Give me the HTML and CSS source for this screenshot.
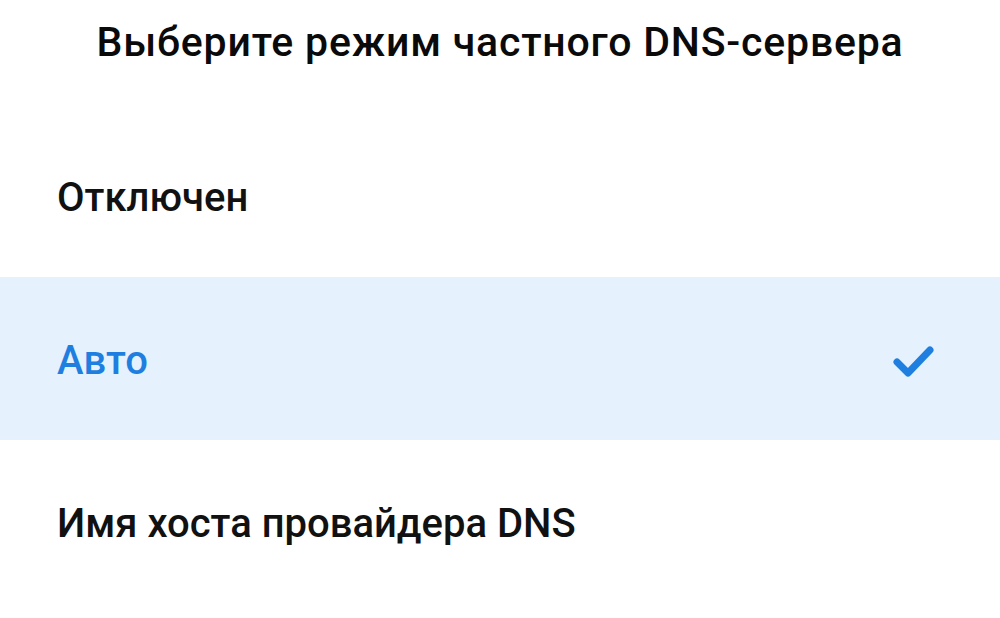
FILE: index.html
```html
<!DOCTYPE html>
<html lang="ru">
<head>
<meta charset="utf-8">
<link rel="stylesheet" href="styles.css">
</head>
<body>
<div class="dialog">
  <div class="title">Выберите режим частного DNS-сервера</div>
  <div class="option">Отключен</div>
  <div class="option selected">
    <span>Авто</span>
    <svg class="check" viewBox="0 0 44 36" width="44" height="36"><path d="M5 19 L16 30 L38 7" fill="none" stroke="#1f7fe0" stroke-width="7" stroke-linecap="round" stroke-linejoin="round"/></svg>
  </div>
  <div class="option">Имя хоста провайдера DNS</div>
</div>
</body>
</html>
```
FILE: styles.css
```css
html, body {
  margin: 0;
  padding: 0;
  background: #ffffff;
}
body {
  width: 1000px;
  height: 618px;
  overflow: hidden;
  font-family: Roboto, "Noto Sans", sans-serif;
}
.dialog {
  display: flex;
  flex-direction: column;
}
.title {
  height: 114px;
  box-sizing: border-box;
  padding-top: 17px;
  line-height: 50px;
  text-align: center;
  font-size: 41px;
  font-weight: 500;
  letter-spacing: 0.8px;
  color: #0a0a0a;
}
.option {
  height: 163px;
  box-sizing: border-box;
  padding: 4px 64px 0 57px;
  display: flex;
  align-items: center;
  justify-content: space-between;
  font-size: 40px;
  font-weight: 500;
  color: #111111;
}
.option.selected {
  background: #e5f1fd;
  color: #1f7fe0;
}
.check {
  display: block;
}
```
